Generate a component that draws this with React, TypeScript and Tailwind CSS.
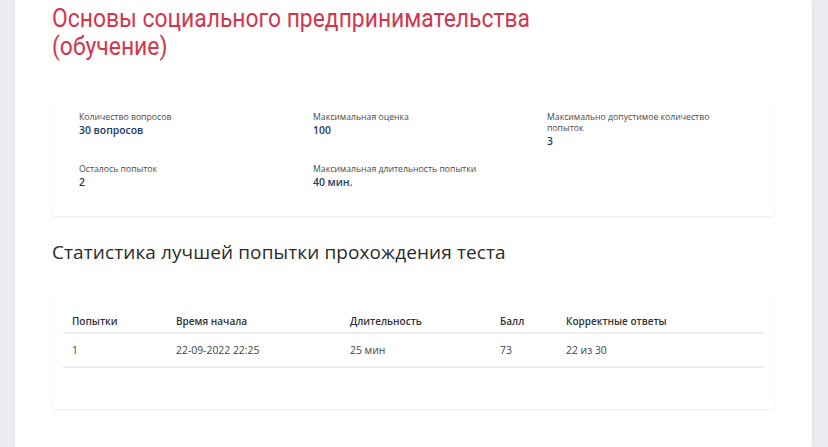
import React from "react";

interface InfoItem {
  label: string;
  value: string;
}

const info: InfoItem[] = [
  { label: "Количество вопросов", value: "30 вопросов" },
  { label: "Максимальная оценка", value: "100" },
  { label: "Максимально допустимое количество попыток", value: "3" },
  { label: "Осталось попыток", value: "2" },
  { label: "Максимальная длительность попытки", value: "40 мин." },
];

const columns = ["Попытки", "Время начала", "Длительность", "Балл", "Корректные ответы"];
const rows = [["1", "22-09-2022 22:25", "25 мин", "73", "22 из 30"]];
const colWidths = ["w-[104px]", "w-[174px]", "w-[150px]", "w-[66px]", ""];

export default function App() {
  return (
    <div className="h-[447px] overflow-hidden bg-[#ebebf1] font-['Open_Sans',sans-serif]">
      <div className="ml-[15px] h-full w-[797px] bg-white pl-[37px] pr-[37px] shadow-[0_0_4px_rgba(0,0,0,0.06)]">
        {/* Course title */}
        <h1 className="pt-[5px] text-[25px] leading-[28px] text-[#d2364f] font-['Roboto',sans-serif]">
          <span className="inline-block origin-left scale-x-[0.915] whitespace-nowrap">
            Основы социального предпринимательства
            <br />
            (обучение)
          </span>
        </h1>

        {/* Test info */}
        <div className="mt-[36px] rounded-sm bg-white px-[27px] pt-[15px] pb-[27px] shadow-[0_1px_2px_rgba(0,0,0,0.08)]">
          <div className="grid grid-cols-[234px_234px_180px] gap-y-[16px]">
            {info.map((item) => (
              <div key={item.label}>
                <div className="text-[8.7px] leading-[11px] text-[#4a4a4a]">{item.label}</div>
                <div className="mt-[1px] text-[10.4px] leading-[13px] font-semibold text-[#1d3766]">
                  {item.value}
                </div>
              </div>
            ))}
          </div>
        </div>

        {/* Statistics */}
        <h2 className="mt-[22px] text-[19px] leading-[28px] text-[#2b2b2b] tracking-[0.1px]">
          Статистика лучшей попытки прохождения теста
        </h2>

        <div className="mt-[25px] rounded-sm bg-white px-[11px] pt-[22px] pb-[41px] shadow-[0_1px_2px_rgba(0,0,0,0.08)]">
          <table className="w-full border-collapse text-[#333]">
            <thead>
              <tr className="border-b-2 border-[#ededed]">
                {columns.map((c, i) => (
                  <th
                    key={c}
                    className={`${colWidths[i]} pl-[9px] pb-[3px] text-left text-[10px] font-semibold leading-[16px]`}
                  >
                    {c}
                  </th>
                ))}
              </tr>
            </thead>
            <tbody>
              {rows.map((r, ri) => (
                <tr key={ri} className="border-b-2 border-[#ededed]">
                  {r.map((cell, i) => (
                    <td key={i} className="pl-[9px] pt-[8px] pb-[8px] text-[10.4px] leading-[16px] text-[#444]">
                      {cell}
                    </td>
                  ))}
                </tr>
              ))}
            </tbody>
          </table>
        </div>
      </div>
    </div>
  );
}
